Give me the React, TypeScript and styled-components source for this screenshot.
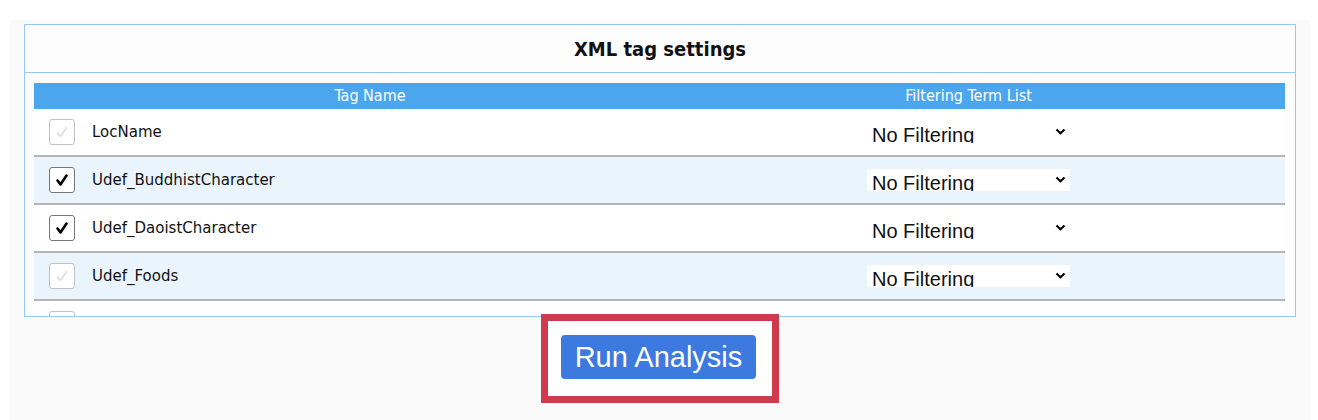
import React from "react";
import styled, { createGlobalStyle } from "styled-components";

const GlobalStyle = createGlobalStyle`
  html, body { margin: 0; padding: 0; background: #ffffff; }
  #root { width: 1318px; }
`;

const Page = styled.div`
  margin: 20px 8px 0 10px;
  padding-top: 4px;
  height: 396px;
  background: #fafafa;
  display: flex;
  flex-direction: column;
  align-items: stretch;
`;

const Panel = styled.section`
  margin: 0 14px;
  height: 293px;
  box-sizing: border-box;
  border: 1px solid #94c9f5;
  background: #fdfdfd;
  display: flex;
  flex-direction: column;
`;

const Title = styled.h2`
  margin: 0;
  height: 47px;
  border-bottom: 1px solid #94c9f5;
  display: flex;
  align-items: center;
  justify-content: center;
  font-family: "DejaVu Sans Condensed", "DejaVu Sans", sans-serif;
  font-weight: bold;
  font-size: 20px;
  color: #111;
`;

const TableArea = styled.div`
  padding: 10px 10px 0 9px;
  display: flex;
  flex-direction: column;
`;

const grid = `
  display: grid;
  grid-template-columns: 54px 564px 1fr;
  align-items: center;
`;

const HeaderRow = styled.div`
  ${grid}
  height: 26px;
  background: #4ca6ee;
  color: #fff;
  font-family: "DejaVu Sans Condensed", "DejaVu Sans", sans-serif;
  font-size: 16px;
`;

const HeaderCell = styled.div`
  text-align: center;
  line-height: 24px;
`;

const Body = styled.div`
  height: 207px;
  overflow: hidden;
`;

const Row = styled.div<{ $alt: boolean }>`
  ${grid}
  height: 46px;
  border-bottom: 2px solid #b4b4b4;
  background: ${(p) => (p.$alt ? "#eaf4fd" : "#ffffff")};
`;

const CheckCell = styled.div`
  display: flex;
  justify-content: center;
  padding-left: 2px;
`;

const Box = styled.div<{ $on: boolean }>`
  width: 26px;
  height: 26px;
  box-sizing: border-box;
  border: 1px solid ${(p) => (p.$on ? "#777" : "#c2c2c2")};
  border-radius: 3px;
  background: #fff;
  display: flex;
  align-items: center;
  justify-content: center;
`;

const NameCell = styled.div`
  padding-left: 4px;
  font-family: "DejaVu Sans", Verdana, sans-serif;
  font-size: 15px;
  color: #111;
`;

const SelectCell = styled.div`
  display: flex;
  justify-content: center;
`;

const Select = styled.div`
  width: 203px;
  height: 22px;
  box-sizing: border-box;
  background: #fff;
  border-radius: 3px;
  overflow: hidden;
  display: flex;
  align-items: flex-start;
  justify-content: space-between;
  padding: 0 4px 0 5px;
  font-family: "Liberation Sans", Arial, sans-serif;
  font-size: 20px;
  color: #111;
`;

const SelectText = styled.span`
  display: block;
  line-height: 20px;
  padding-top: 4px;
  white-space: nowrap;
`;

const Chevron = styled.svg`
  margin-top: 7px;
  flex: none;
`;

const Footer = styled.div`
  display: flex;
  justify-content: center;
  margin-top: -3px;
`;

const Highlight = styled.div`
  border: 7px solid #d03a4c;
  background: #ffffff;
  padding: 14px 16px 17px 13px;
`;

const RunButton = styled.button`
  width: 195px;
  height: 44px;
  border: none;
  border-radius: 4px;
  background: #3d7ae0;
  color: #fff;
  font-family: "Liberation Sans", Arial, sans-serif;
  font-size: 29px;
  padding: 0;
  cursor: pointer;
`;

const CheckMark = ({ on }: { on: boolean }) => (
  <svg width="14" height="14" viewBox="0 0 14 14">
    <path
      d="M2.5 7.5 L5.5 11.5 L11.5 2.5"
      fill="none"
      stroke={on ? "#000" : "#dcdcdc"}
      strokeWidth={on ? 2.6 : 1.4}
      strokeLinecap="round"
      strokeLinejoin="round"
    />
  </svg>
);

const rows = [
  { name: "LocName", on: false },
  { name: "Udef_BuddhistCharacter", on: true },
  { name: "Udef_DaoistCharacter", on: true },
  { name: "Udef_Foods", on: false },
  { name: "Udef_Places", on: false },
];

export default function App() {
  return (
    <>
      <GlobalStyle />
      <Page>
        <Panel>
          <Title>XML tag settings</Title>
          <TableArea>
            <HeaderRow>
              <div />
              <HeaderCell>Tag Name</HeaderCell>
              <HeaderCell>Filtering Term List</HeaderCell>
            </HeaderRow>
            <Body>
              {rows.map((r, i) => (
                <Row key={r.name} $alt={i % 2 === 1}>
                  <CheckCell>
                    <Box $on={r.on}>
                      <CheckMark on={r.on} />
                    </Box>
                  </CheckCell>
                  <NameCell>{r.name}</NameCell>
                  <SelectCell>
                    <Select>
                      <SelectText>No Filtering</SelectText>
                      <Chevron width="11" height="7" viewBox="0 0 11 7">
                        <path
                          d="M1.5 1.5 L5.5 5.2 L9.5 1.5"
                          fill="none"
                          stroke="#000"
                          strokeWidth="2.2"
                        />
                      </Chevron>
                    </Select>
                  </SelectCell>
                </Row>
              ))}
            </Body>
          </TableArea>
        </Panel>
        <Footer>
          <Highlight>
            <RunButton>Run Analysis</RunButton>
          </Highlight>
        </Footer>
      </Page>
    </>
  );
}
